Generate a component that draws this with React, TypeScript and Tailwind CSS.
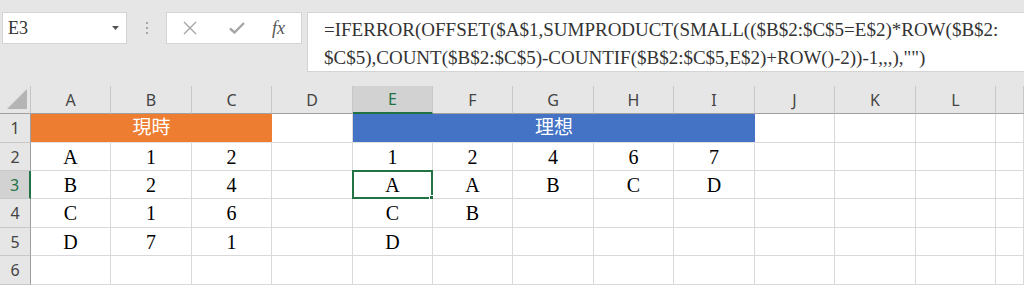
import React from "react";

const cols = ["A", "B", "C", "D", "E", "F", "G", "H", "I", "J", "K", "L", ""];

const serif = "font-['Liberation_Serif','Noto_Sans_CJK_TC',serif]";
const sans = "font-['Noto_Sans','Liberation_Sans',sans-serif]";

// values for rows 2..6, columns A..L
const data: string[][] = [
  ["A", "1", "2", "", "1", "2", "4", "6", "7", "", "", ""],
  ["B", "2", "4", "", "A", "A", "B", "C", "D", "", "", ""],
  ["C", "1", "6", "", "C", "B", "", "", "", "", "", ""],
  ["D", "7", "1", "", "D", "", "", "", "", "", "", ""],
  ["", "", "", "", "", "", "", "", "", "", "", ""],
];

function Cell({ children, selected }: { children?: React.ReactNode; selected?: boolean }) {
  return (
    <div
      className={`relative flex items-center justify-center border-r border-b border-[#d9d9d9] bg-white text-[20px] text-black ${serif}`}
    >
      {children}
      {selected && (
        <div className="absolute -left-px -top-px -right-px -bottom-px border-2 border-[#217346]">
          <div className="absolute -right-[4px] -bottom-[4px] w-[6px] h-[6px] bg-[#217346] border border-white" />
        </div>
      )}
    </div>
  );
}

export default function App() {
  return (
    <div className="w-[1024px] h-[285px] overflow-hidden bg-[#e6e6e6] flex flex-col">
      {/* formula bar */}
      <div className="flex items-start pt-[12px] h-[86px]">
        <div className="ml-[2px] w-[125px] h-[32px] bg-white border border-[#d4d4d4] flex items-center justify-between pl-[5px] pr-[7px]">
          <span className={`text-[18px] text-[#333] ${serif}`}>E3</span>
          <svg width="7" height="4" viewBox="0 0 7 4"><path d="M0 0h7L3.5 4z" fill="#555" /></svg>
        </div>
        <div className="w-[39px] h-[32px] flex items-center justify-center">
          <div className="flex flex-col gap-[3px]">
            <div className="w-[2px] h-[2px] bg-[#a6a6a6]" />
            <div className="w-[2px] h-[2px] bg-[#a6a6a6]" />
            <div className="w-[2px] h-[2px] bg-[#a6a6a6]" />
          </div>
        </div>
        <div className="w-[136px] h-[32px] bg-white border border-[#d4d4d4] flex items-center">
          <svg className="ml-[16px]" width="14" height="14" viewBox="0 0 14 14">
            <path d="M1 1L13 13M13 1L1 13" stroke="#a6a6a6" strokeWidth="1.4" />
          </svg>
          <svg className="ml-[32px]" width="16" height="12" viewBox="0 0 16 12">
            <path d="M1 6.5L5.5 10.5L15 1" stroke="#a6a6a6" strokeWidth="2.4" fill="none" />
          </svg>
          <span className={`ml-[27px] italic text-[18px] text-[#555] font-['Liberation_Serif',serif]`}>fx</span>
        </div>
        <div className="ml-[5px] flex-1 h-[60px] bg-white border-l border-t border-b border-[#d4d4d4] pl-[16px] pt-[3px]">
          <div className={`text-[19px] leading-[28px] text-[#333] whitespace-nowrap ${serif}`}>
            =IFERROR(OFFSET($A$1,SUMPRODUCT(SMALL(($B$2:$C$5=E$2)*ROW($B$2:
          </div>
          <div className={`text-[19px] leading-[28px] text-[#333] whitespace-nowrap ${serif}`}>
            $C$5),COUNT($B$2:$C$5)-COUNTIF($B$2:$C$5,E$2)+ROW()-2))-1,,,),"")
          </div>
        </div>
      </div>

      {/* sheet */}
      <div className="grid grid-cols-[31px_80px_81px_80px_81px_80px_80px_81px_80px_81px_80px_81px_80px_1fr] grid-rows-[28px_29px_28px_28px_29px_28px_29px]">
        {/* corner */}
        <div className="relative bg-[#e6e6e6] border-r border-b border-[#9f9f9f] border-r-[#c6c6c6]">
          <svg className="absolute right-[3px] bottom-[4px]" width="20" height="20" viewBox="0 0 20 20">
            <path d="M20 0V20H0z" fill="#b4b4b4" />
          </svg>
        </div>
        {cols.map((c, i) => (
          <div
            key={i}
            className={`flex items-center justify-center border-r border-[#c8c8c8] text-[16px] ${sans} ${
              c === "E"
                ? "bg-[#d2d2d2] text-[#217346] border-b-2 border-b-[#217346]"
                : "bg-[#e6e6e6] text-[#444] border-b border-b-[#9f9f9f]"
            }`}
          >
            {c}
          </div>
        ))}

        {/* row 1 */}
        <div className={`flex items-center justify-center bg-[#e6e6e6] border-r border-r-[#9f9f9f] border-b border-b-[#c8c8c8] text-[16px] text-[#444] ${sans}`}>
          1
        </div>
        <div className={`col-span-3 flex items-center justify-center bg-[#ed7d31] border-b border-[#e3e3e3] text-white text-[19px] ${serif}`}>
          現時
        </div>
        <Cell />
        <div className={`col-span-5 flex items-center justify-center bg-[#4472c4] border-b border-[#e3e3e3] text-white text-[19px] ${serif}`}>
          理想
        </div>
        <Cell />
        <Cell />
        <Cell />
        <Cell />

        {data.map((row, r) => (
          <React.Fragment key={r}>
            <div
              className={`flex items-center justify-center border-b border-b-[#c8c8c8] text-[16px] ${sans} ${
                r === 1
                  ? "bg-[#d2d2d2] text-[#217346] border-r-2 border-r-[#217346]"
                  : "bg-[#e6e6e6] text-[#444] border-r border-r-[#9f9f9f]"
              }`}
            >
              {r + 2}
            </div>
            {row.map((v, c) => (
              <Cell key={c} selected={r === 1 && c === 4}>
                {v}
              </Cell>
            ))}
            <Cell />
          </React.Fragment>
        ))}
      </div>
    </div>
  );
}
